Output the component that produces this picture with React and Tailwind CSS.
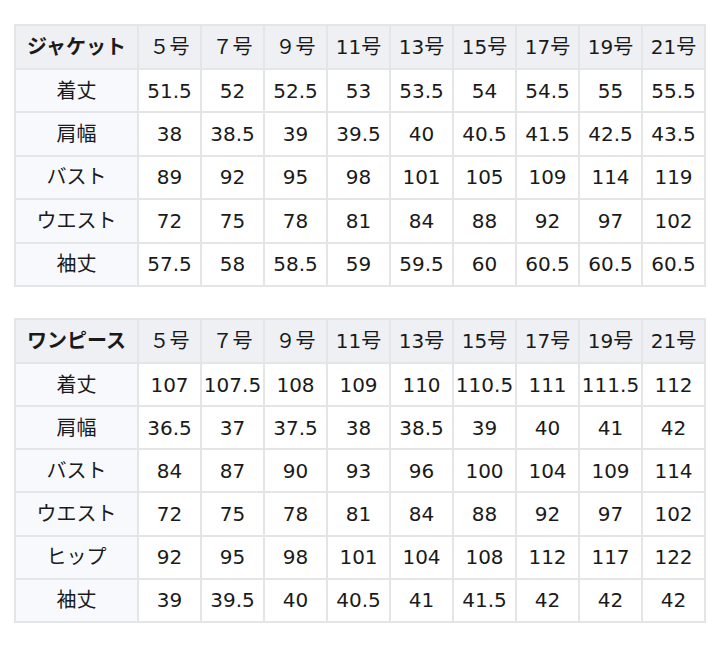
import React from 'react';

const sizes = ['５号', '７号', '９号', '11号', '13号', '15号', '17号', '19号', '21号'];

const jacket = [
  ['着丈', '51.5', '52', '52.5', '53', '53.5', '54', '54.5', '55', '55.5'],
  ['肩幅', '38', '38.5', '39', '39.5', '40', '40.5', '41.5', '42.5', '43.5'],
  ['バスト', '89', '92', '95', '98', '101', '105', '109', '114', '119'],
  ['ウエスト', '72', '75', '78', '81', '84', '88', '92', '97', '102'],
  ['袖丈', '57.5', '58', '58.5', '59', '59.5', '60', '60.5', '60.5', '60.5'],
];

const onepiece = [
  ['着丈', '107', '107.5', '108', '109', '110', '110.5', '111', '111.5', '112'],
  ['肩幅', '36.5', '37', '37.5', '38', '38.5', '39', '40', '41', '42'],
  ['バスト', '84', '87', '90', '93', '96', '100', '104', '109', '114'],
  ['ウエスト', '72', '75', '78', '81', '84', '88', '92', '97', '102'],
  ['ヒップ', '92', '95', '98', '101', '104', '108', '112', '117', '122'],
  ['袖丈', '39', '39.5', '40', '40.5', '41', '41.5', '42', '42', '42'],
];

function SizeTable({ title, rows, className }) {
  return (
    <table className={`w-[690px] border-collapse table-fixed text-center text-[20px] leading-none text-[#1a1a1a] ${className}`}>
      <colgroup>
        <col className="w-[123px]" />
        {sizes.map((s) => (
          <col key={s} className="w-[63px]" />
        ))}
      </colgroup>
      <thead>
        <tr className="h-[44px] bg-[#eff0f3]">
          <th className="border-2 border-[#e4e5e7] font-bold">{title}</th>
          {sizes.map((s) => (
            <th key={s} className="border-2 border-[#e4e5e7] font-normal">
              {s}
            </th>
          ))}
        </tr>
      </thead>
      <tbody>
        {rows.map((row) => (
          <tr key={row[0]} className="h-[43px]">
            <td className="border-2 border-[#e4e5e7] bg-[#f7f9fc]">{row[0]}</td>
            {row.slice(1).map((v, i) => (
              <td key={i} className="border-2 border-[#e4e5e7] bg-white">
                {v}
              </td>
            ))}
          </tr>
        ))}
      </tbody>
    </table>
  );
}

export default function App() {
  return (
    <div
      className="w-[720px] h-[648px] bg-white pl-[14px] pt-[24px] flex flex-col gap-[31px]"
      style={{ fontFamily: '"DejaVu Sans", "Noto Sans CJK JP", sans-serif' }}
    >
      <SizeTable title="ジャケット" rows={jacket} className="h-[263px]" />
      <SizeTable title="ワンピース" rows={onepiece} className="h-[305px]" />
    </div>
  );
}
